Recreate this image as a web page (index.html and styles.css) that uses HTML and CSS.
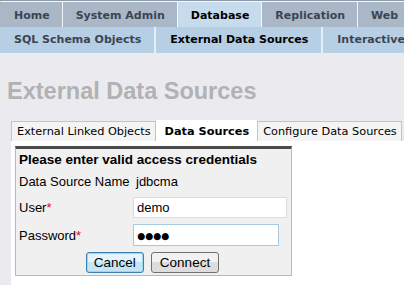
FILE: index.html
```html
<!DOCTYPE html>
<html lang="en">
<head>
    <meta charset="UTF-8">
    <title>External Data Sources</title>
    <link rel="stylesheet" href="styles.css">
</head>
<body>
    <div class="main-tabs">
        <a class="tab">Home</a>
        <a class="tab">System Admin</a>
        <a class="tab active">Database</a>
        <a class="tab">Replication</a>
        <a class="tab">Web</a>
    </div>
    <div class="sub-tabs">
        <a class="tab">SQL Schema Objects</a>
        <a class="tab active">External Data Sources</a>
        <a class="tab">Interactive</a>
    </div>

    <h1 class="page-title">External Data Sources</h1>

    <div class="tabset">
        <div class="page-tabs">
            <a class="ptab">External Linked Objects</a>
            <a class="ptab active">Data Sources</a>
            <a class="ptab">Configure Data Sources</a>
        </div>
        <div class="tab-panel">
            <form class="cred-box">
                <div class="cred-title">Please enter valid access credentials</div>
                <div class="row name-row">
                    <span class="label">Data Source Name</span>
                    <span class="value">jdbcma</span>
                </div>
                <div class="row">
                    <label class="label">User<span class="req">*</span></label>
                    <input class="field user" type="text" value="demo">
                </div>
                <div class="row">
                    <label class="label">Password<span class="req">*</span></label>
                    <input class="field pass" type="text" value="●●●●" aria-label="Password">
                </div>
                <div class="buttons">
                    <button type="button" class="btn focused">Cancel</button>
                    <button type="button" class="btn">Connect</button>
                </div>
            </form>
        </div>
    </div>
</body>
</html>
```

FILE: styles.css
```css
:root {
    --page-bg: #ebebef;
    --tab-bg: #a9b7c6;
    --tab-active: #c6dbec;
    --sub-bg: #b7cfe5;
    --tab-text: #3b4552;
}

body {
    margin: 0;
    background-color: var(--page-bg);
    font-family: "DejaVu Sans", Verdana, sans-serif;
    overflow: hidden;
    width: 404px;
    height: 285px;
}

.main-tabs,
.sub-tabs {
    display: flex;
    white-space: nowrap;
}

.main-tabs {
    background-color: #8d9aa8;
    padding-top: 1px;
}

.main-tabs .tab {
    font-size: 11px;
    font-weight: bold;
    color: var(--tab-text);
    background-color: var(--tab-bg);
    border-left: 1px solid #f4f6f8;
    border-top: 1px solid #f4f6f8;
    height: 25px;
    line-height: 27px;
    padding: 0 12px 0 13px;
    flex-shrink: 0;
}

.main-tabs .tab:first-child {
    border-left-color: var(--tab-bg);
    padding-left: 13px;
}

.main-tabs .tab:last-child {
    flex-grow: 1;
}

.main-tabs .tab.active {
    background-color: var(--tab-active);
    color: #000;
}

.sub-tabs {
    background-color: var(--sub-bg);
    height: 26px;
}

.sub-tabs .tab {
    font-size: 11px;
    font-weight: bold;
    color: var(--tab-text);
    line-height: 26px;
    padding: 0 13px 0 14px;
    border-right: 2px solid #e6eef6;
    flex-shrink: 0;
}

.sub-tabs .tab:last-child {
    border-right: none;
}

.sub-tabs .tab.active {
    color: #000;
}

.page-title {
    font-family: "Liberation Sans", Arial, sans-serif;
    font-size: 23.5px;
    font-weight: bold;
    color: #b2b2b2;
    margin: 0;
    padding: 23px 0 0 7px;
    height: 44px;
    line-height: 30px;
}

.tabset {
    margin-left: 11px;
}

.page-tabs {
    display: flex;
    white-space: nowrap;
    align-items: flex-end;
    height: 21px;
}

.ptab {
    font-size: 11.3px;
    color: #000;
    background-color: #f4f4f4;
    border: 1px solid #c4c4c4;
    border-bottom: none;
    padding: 0 4px 0 5px;
    height: 19px;
    line-height: 20px;
    flex-shrink: 0;
}

.ptab.active {
    background-color: #fff;
    font-weight: bold;
    height: 20px;
    line-height: 22px;
    border-color: #fff;
    padding: 0 7px 0 8px;
}

.tab-panel {
    background-color: #fff;
    padding: 5px 0 0 4px;
    height: 139px;
}

.cred-box {
    width: 272px;
    margin: 0;
    background-color: #f0f0f0;
    border: 1px solid #b8b8b8;
    border-top: 3px solid #4a4a4a;
    padding: 2px 0 1px 3px;
    font-family: "Liberation Sans", Arial, sans-serif;
    font-size: 13px;
    color: #000;
}

.cred-title {
    font-weight: bold;
    font-size: 13.5px;
    height: 18px;
    line-height: 18px;
}

.row {
    display: flex;
    align-items: center;
    height: 28px;
}

.row.name-row {
    height: 24px;
}

.label {
    width: 114px;
    flex-shrink: 0;
    white-space: nowrap;
}

.req {
    color: #e8003c;
}

.value {
    margin-left: 3px;
}

.field {
    font-family: "Liberation Sans", Arial, sans-serif;
    font-size: 13px;
    border: 1px solid #dcdcdc;
    background-color: #fff;
    padding: 0 3px;
    margin: 0;
    box-sizing: border-box;
}

.field.user {
    width: 154px;
    height: 21px;
}

.field.pass {
    width: 146px;
    height: 22px;
    border-color: #a9c9e3;
    font-family: "DejaVu Sans", sans-serif;
    font-size: 9.2px;
}

.buttons {
    display: flex;
    justify-content: center;
    gap: 7px;
    margin-top: 3px;
    padding: 0 5px 1px 0;
}

.btn {
    font-family: "Liberation Sans", Arial, sans-serif;
    font-size: 13.5px;
    height: 21px;
    padding: 0 8px;
    border: 1px solid #707070;
    border-radius: 3px;
    background: linear-gradient(#f2f2f2 50%, #dddddd 50%);
    color: #000;
}

.btn.focused {
    padding: 0 7px;
    border-color: #3c7fb1;
    background: linear-gradient(#e5f4fc 50%, #c4e5f6 50%);
    box-shadow: inset 0 0 0 1px #9fd5f2;
}
```
